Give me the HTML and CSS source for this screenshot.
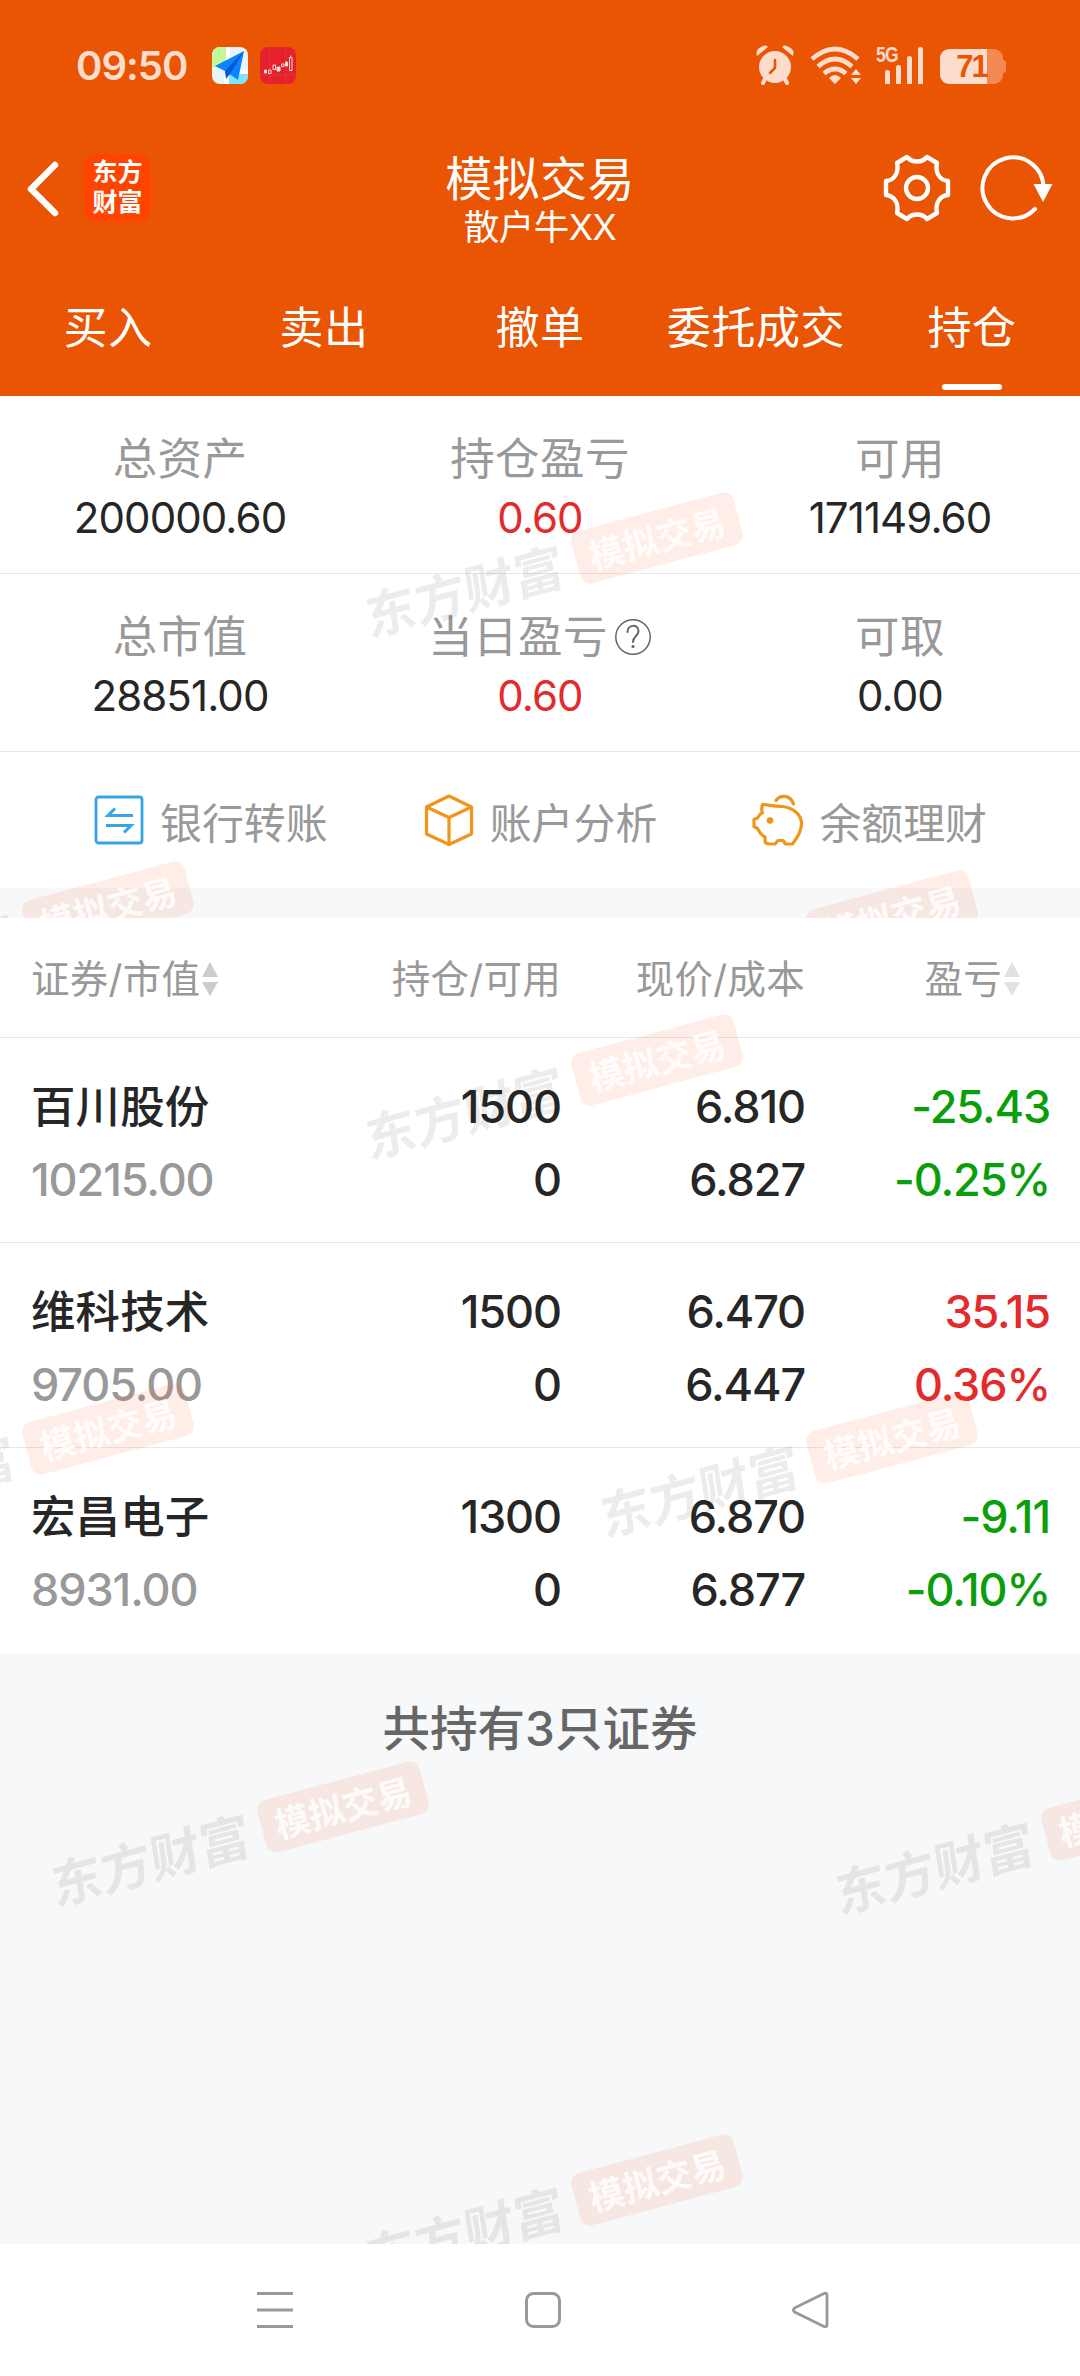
FILE: index.html
```html
<!DOCTYPE html>
<html lang="zh-CN">
<head>
<meta charset="utf-8">
<title>模拟交易</title>
<link rel="stylesheet" href="styles.css">
</head>
<body>
<div class="screen">
  <header class="top">
    <div class="status">
      <span class="time">09:50</span>
      <svg class="app-icon" viewBox="0 0 36 37"><defs><clipPath id="r"><rect width="36" height="37" rx="8"/></clipPath></defs><g clip-path="url(#r)"><path fill="#e9f4f8" d="M0 0h36v37H0z"/><path fill="#c2f79c" d="M0 0h14v20H0z"/><path fill="#7fe5ff" d="M17 27h19v10H17z"/><path fill="#fff" d="M14 0h4v14h-4zM18 23h18v4H18zM12 28h5v9h-5z"/><path fill="#0a84ff" d="M32 4 3 19l10 5 13 9z"/><path fill="#0756d8" d="m32 4-19 20 1 8 4-5z"/></g></svg>
      <svg class="app-icon second" viewBox="0 0 36 37"><rect width="36" height="37" rx="8" fill="#e5222b"/><path stroke="#ea3a40" stroke-width=".7" d="M10 0v37M26 0v37M0 28h36"/><g fill="none" stroke="#ffd9d5" stroke-width="1"><path fill="#fff" d="M4.500 23h2v3h-2zM17 20h3v4h-3zM25.500 15h2v4h-2z"/><path d="M8.500 23h2.500v3.500H8.500zM13 18h2.500v4.500H13zM21.500 17h2.500v2.500h-2.500zM29.500 10.500h2.500v13h-2.500zM30.700 8.500v2"/></g></svg>
      <div class="status-right">
        <svg class="alarm" viewBox="0 0 38 40"><g fill="#fbdccd"><circle cx="19" cy="22" r="16"/><path d="M1 11Q-1 5 5 2q5-3 7 0zM37 11Q39 5 33 2q-5-3-7 0z"/></g><path stroke="#fbdccd" stroke-width="4" stroke-linecap="round" d="m9 34-2 4M29 34l2 4"/><path fill="none" stroke="#ea5504" stroke-width="2.600" stroke-linecap="round" d="M19 15v8l-5 5"/></svg>
        <svg class="wifi" viewBox="0 0 52 38"><g fill="none" stroke="#fbdccd" stroke-width="4.600"><path d="M2 13q23-20 46 0M8 20.500q17-15 34 0M14 27.500q11-9 22 0"/></g><path fill="#fbdccd" d="M19 32q6-6 12 0l-6 6zM46 23l5 6H41zM46 38l5-6H41z"/></svg>
        <div class="signal"><span class="net">5G</span><svg viewBox="0 0 48 38"><path fill="#fbdccd" d="M9 26q0-2 2.500-2t2.500 2v12H9zM20 21q0-2 2.500-2t2.500 2v17h-5zM31 12q0-2 2.500-2t2.500 2v26h-5zM42 3q0-2 2.500-2T47 3v35h-5z"/></svg></div>
        <div class="battery"><span>71</span></div>
      </div>
    </div>
    <div class="title-bar">
      <div class="side">
        <svg class="back" viewBox="0 0 34 56"><path fill="none" stroke="#fff" stroke-width="6.500" stroke-linecap="round" stroke-linejoin="round" d="M29 4 5 28l24 24"/></svg>
        <div class="logo">东方<br>财富</div>
      </div>
      <div class="titles"><h1>模拟交易</h1><p>散户牛XX</p></div>
      <div class="side end">
        <svg class="gear" viewBox="-34 -34 68 68"><g fill="none" stroke="#fff" stroke-width="4.400" stroke-linejoin="round"><path d="M-10-31C-5-25 5-25 10-31L20-25C18-16 22-8 31-7V7C22 8 18 16 20 25L10 31C5 25-5 25-10 31L-20 25C-18 16-22 8-31 7V-7C-22-8-18-16-20-25Z"/><circle r="11"/></g></svg>
        <svg class="reload" viewBox="-34 -34 76 68"><path fill="none" stroke="#fff" stroke-width="4" stroke-linecap="round" d="M22 21A30.500 30.500 0 1 1 30.500 0"/><path fill="#fff" d="M20.500-4h19L30 14z"/></svg>
      </div>
    </div>
    <nav class="tabs"><span>买入</span><span>卖出</span><span>撤单</span><span>委托成交</span><span class="active">持仓</span></nav>
  </header>

  <section class="account">
    <div class="stats">
      <div><label>总资产</label><b>200000.60</b></div>
      <div><label>持仓盈亏</label><b class="up">0.60</b></div>
      <div><label>可用</label><b>171149.60</b></div>
    </div>
    <div class="stats">
      <div><label>总市值</label><b>28851.00</b></div>
      <div><label>当日盈亏<svg class="help" viewBox="0 0 38 38"><circle cx="19" cy="19" r="17.200" fill="none" stroke="#666" stroke-width="1.500"/><path fill="none" stroke="#666" stroke-width="2" stroke-linecap="round" d="M13.500 14c0-8 11-8 11-1 0 5-5.500 5-5.500 11"/><circle cx="19" cy="28.500" r="1.600" fill="#666"/></svg></label><b class="up">0.60</b></div>
      <div><label>可取</label><b>0.00</b></div>
    </div>
    <div class="actions">
      <a><svg viewBox="0 0 52 52"><g fill="none" stroke="#35a4e8" stroke-width="2.800"><rect x="3" y="3" width="46" height="46" rx="2.500"/><path stroke-width="3" d="M40 21.500H15l7-7M13 31.500h25l-7 7"/></g></svg>银行转账</a>
      <a><svg viewBox="0 0 52 52"><path fill="none" stroke="#f0941a" stroke-width="3.200" stroke-linejoin="round" d="m26 2 22.500 11v27L26 50.500 3.500 40V13zM3.500 13 26 23.500 48.500 13M26 23.500v27"/></svg>账户分析</a>
      <a><svg viewBox="0 0 52 52"><g fill="none" stroke="#f0941a" stroke-width="3.200" stroke-linejoin="round" stroke-linecap="round"><path d="M10.500 10.500C18 11 20 12 30 12.500c12 1 19.500 9 19.500 17 0 8-4 14-9 20.500h-7l-2.500-3.500h-5L23 50h-5q-5 0-5-3v-4c-4-2-5.500-5-7.500-8.500l-3.500-2v-7l3.500-1.500q2-4 5-5.500-1.500-2.500 0-8z"/><path d="M24 6.500c4-6 14-6 17.500 3.500"/></g><circle cx="18" cy="26.500" r="3.300" fill="#f0941a"/></svg>余额理财</a>
    </div>
    <div class="band"></div>
    <div class="marks">
      <div class="mark a"><i>东方财富</i><em>模拟交易</em></div>
      <div class="mark b"><i>东方财富</i><em>模拟交易</em></div>
      <div class="mark c"><i>东方财富</i><em>模拟交易</em></div>
    </div>
  </section>

  <section class="holdings">
    <div class="row head"><span class="first">证券/市值<svg class="sort" viewBox="0 0 16 34"><path fill="#ccc" d="m8 0 8 15H0zM8 34l8-14H0z"/></svg></span><span>持仓/可用</span><span>现价/成本</span><span class="profit">盈亏<svg class="sort" viewBox="0 0 16 34"><path fill="#e2e2e2" d="m8 0 8 15H0zM8 34l8-14H0z"/></svg></span></div>
    <div class="row"><div class="first"><strong>百川股份</strong><small>10215.00</small></div><div>1500<br>0</div><div>6.810<br>6.827</div><div class="down">-25.43<br>-0.25%</div></div>
    <div class="row"><div class="first"><strong>维科技术</strong><small>9705.00</small></div><div>1500<br>0</div><div>6.470<br>6.447</div><div class="up">35.15<br>0.36%</div></div>
    <div class="row"><div class="first"><strong>宏昌电子</strong><small>8931.00</small></div><div>1300<br>0</div><div>6.870<br>6.877</div><div class="down">-9.11<br>-0.10%</div></div>
    <div class="marks">
      <div class="mark d"><i>东方财富</i><em>模拟交易</em></div>
      <div class="mark e"><i>东方财富</i><em>模拟交易</em></div>
      <div class="mark f"><i>东方财富</i><em>模拟交易</em></div>
    </div>
  </section>

  <section class="rest">
    <p>共持有3只证券</p>
    <div class="marks">
      <div class="mark g"><i>东方财富</i><em>模拟交易</em></div>
      <div class="mark h"><i>东方财富</i><em>模拟交易</em></div>
      <div class="mark j"><i>东方财富</i><em>模拟交易</em></div>
    </div>
  </section>

  <footer class="sysnav">
    <svg viewBox="0 0 40 40"><path stroke="#999" stroke-width="3" d="M2 3.500h36M2 20h36M2 36.500h36"/></svg>
    <svg viewBox="0 0 40 40"><rect x="3.500" y="3.500" width="33" height="33" rx="7" fill="none" stroke="#999" stroke-width="3"/></svg>
    <svg viewBox="0 0 40 40"><path fill="none" stroke="#999" stroke-width="2.800" stroke-linejoin="round" d="M3.500 18Q1.500 20 3.500 22L33 36.500q3 1 3-2v-29q0-3-3-2z"/></svg>
  </footer>
</div>
</body>
</html>
```
FILE: styles.css
```css
* { box-sizing: border-box; }
body { margin: 0; }
h1, p { margin: 0; font-weight: 400; }
svg { display: block; flex: none; }

.screen {
  width: 1080px;
  height: 2376px;
  display: flex;
  flex-direction: column;
  overflow: hidden;
  background: #f7f8fa;
  color: #262626;
  font-family: Inter, "Noto Sans CJK SC", sans-serif;
}

.top { height: 396px; background: #ea5504; color: #fff; }

/* status bar */
.status { height: 131px; padding: 0 74px 0 76px; display: flex; align-items: center; }
.time { width: 136px; font-size: 40px; font-weight: 600; letter-spacing: -1px; color: #fbdccd; }
.app-icon { width: 36px; height: 37px; }
.app-icon.second { margin-left: 12px; }
.status-right { margin: -2px 0 0 auto; display: flex; align-items: center; }
.alarm { width: 38px; height: 40px; margin-right: 16px; }
.wifi { width: 52px; height: 38px; margin-right: 14px; }
.signal { position: relative; width: 48px; height: 38px; margin-right: 16px; }
.signal svg { width: 48px; height: 38px; }
.net { position: absolute; left: 0; top: -2px; font: 700 22px/21px "Liberation Sans", sans-serif; letter-spacing: -1px; color: #fbdccd; transform: scaleX(.8); transform-origin: left; }
.battery { position: relative; width: 63px; height: 35px; margin-right: 3px; margin-top: 3px; border-radius: 9px; background: linear-gradient(90deg, #fbdccd 47px, #f38a52 47px); text-align: center; }
.battery::after { content: ""; position: absolute; left: 63px; top: 11px; width: 3px; height: 13px; border-radius: 0 3px 3px 0; background: #f38a52; }
.battery span { font: 700 31px/36px "Liberation Sans", sans-serif; letter-spacing: -2px; color: #ea5504; }

/* title bar */
.title-bar { height: 133px; display: flex; justify-content: space-between; }
.side { width: 250px; padding: 23px 0 0 26px; display: flex; align-items: flex-start; }
.back { width: 34px; height: 56px; margin: 7px 24px 0 0; }
.logo { width: 67px; height: 68px; border-radius: 14px; background: #ff4400; font-size: 25px; line-height: 30px; font-weight: 700; text-align: center; padding-top: 3px; }
.titles { text-align: center; }
.titles h1 { margin-top: 18px; font-size: 47px; line-height: 59px; letter-spacing: .4px; }
.titles p { font-size: 35.500px; line-height: 40px; letter-spacing: -.5px; }
.side.end { padding: 24px 27px 0 0; justify-content: flex-end; }
.gear { width: 68px; height: 68px; margin: -1px 28px 0 0; }
.reload { width: 76px; height: 68px; margin: -1px -2px 0 0; }

.tabs { height: 132px; display: grid; grid-template-columns: repeat(5, 1fr); }
.tabs span { display: flex; flex-direction: column; align-items: center; font-size: 44px; line-height: 60px; letter-spacing: .6px; padding-top: 34px; }
.tabs .active::after { content: ""; width: 60px; height: 6px; margin-top: 26px; border-radius: 3px; background: #fff; }

/* account summary */
.account { position: relative; height: 522px; background: #fff; }
.stats { height: 178px; border-bottom: 1px solid #e8e8e8; display: grid; grid-template-columns: repeat(3, 1fr); }
.stats div { display: flex; flex-direction: column; align-items: center; padding-top: 33px; }
.stats label { display: flex; align-items: center; font-size: 44.500px; line-height: 60px; letter-spacing: .4px; color: #999; }
.stats b { font-size: 42px; line-height: 58px; font-weight: 400; letter-spacing: -.9px; }
.help { width: 38px; height: 38px; margin-left: 6px; }
.up, .stats .up { color: #e42b2b; }
.down { color: #0b9e0b; }
.actions { height: 136px; padding: 0 93px 0 93px; display: flex; align-items: center; justify-content: space-between; }
.actions a { display: flex; align-items: center; gap: 15px; font-size: 41.900px; color: #999; }
.actions svg { width: 52px; height: 52px; }
.band { height: 30px; background: #f7f8fa; }

/* holdings table */
.holdings { position: relative; height: 735px; background: #fff; }
.row { height: 205px; padding: 32px 30px 0 31px; display: grid; grid-template-columns: 260px 270px 244px 1fr; border-bottom: 1px solid #e8e8e8; text-align: right; font-size: 45px; line-height: 73px; font-weight: 500; letter-spacing: -1.100px; }
.row:nth-child(4) { border-bottom: 0; }
.row .first { text-align: left; display: flex; flex-direction: column; }
.row strong { font-size: 44.500px; font-weight: 500; letter-spacing: .1px; padding-top: 1px; margin-bottom: -1px; }
.row small { font-size: 45px; color: #999; }
.row.head { height: 120px; padding-top: 1px; line-height: 120px; align-items: center; font-size: 38.500px; font-weight: 400; letter-spacing: .3px; color: #999; }
.row.head .first, .row.head .profit { display: flex; flex-direction: row; align-items: center; }
.row.head .profit { justify-content: flex-end; padding-right: 30px; }
.sort { width: 16px; height: 34px; margin-left: 2px; }

/* remaining area */
.rest { position: relative; height: 591px; text-align: center; color: #666; }
.rest p { padding-top: 41px; font-size: 47.500px; line-height: 70px; font-weight: 500; }

/* watermarks laid over each section */
.marks { position: absolute; inset: 0; overflow: hidden; }
.mark { position: absolute; width: 386px; height: 54px; display: flex; align-items: center; justify-content: space-between; transform: rotate(-15deg); transform-origin: 302px 27px; white-space: nowrap; }
.mark i { font-size: 51px; line-height: 54px; font-weight: 700; color: rgba(0, 0, 0, .075); transform: translateY(3px) skewX(-6deg); font-style: normal; }
.mark em { width: 168px; height: 54px; border-radius: 10px; background: rgba(255, 90, 30, .1); color: rgba(255, 255, 255, .85); font: 700 35px/52px "Noto Sans CJK SC", sans-serif; text-align: center; }
.a { left: 355px; top: 115px; }
.b { left: -194px; top: 484px; }
.c { left: 590px; top: 493px; }
.d { left: 355px; top: 115px; }
.e { left: -194px; top: 484px; }
.f { left: 590px; top: 493px; }
.g { left: 41px; top: 127px; }
.h { left: 825px; top: 135px; }
.j { left: 355px; top: 500px; }

.sysnav { height: 132px; background: #fff; display: flex; align-items: center; padding-left: 255px; gap: 228px; }
.sysnav svg { width: 40px; height: 40px; }
```
